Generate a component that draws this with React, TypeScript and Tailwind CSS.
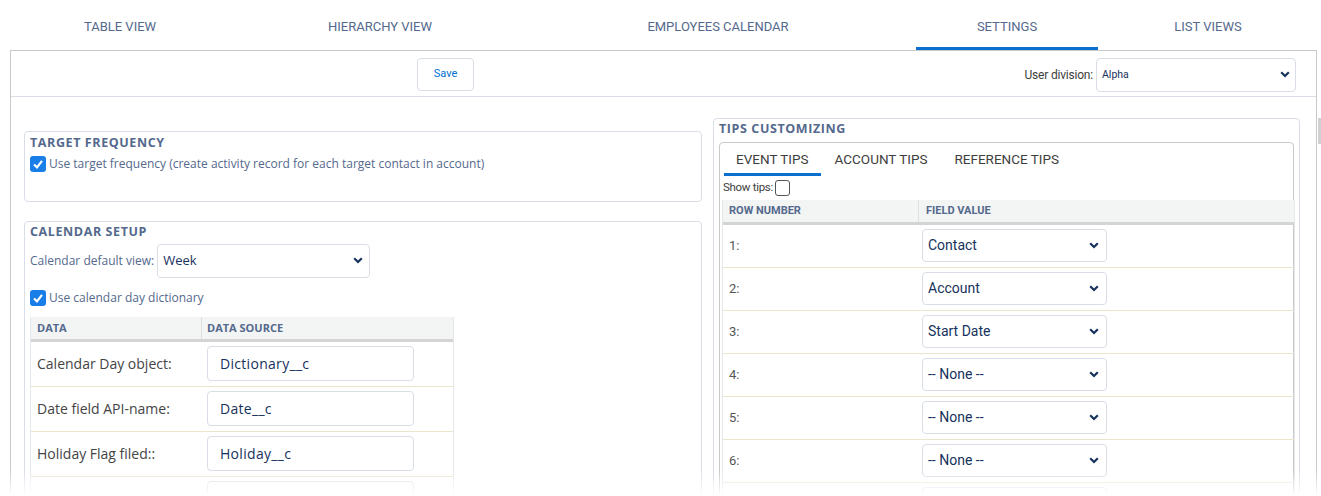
import React from "react";

const tabs = [
  { label: "TABLE VIEW", w: "w-[240px]" },
  { label: "HIERARCHY VIEW", w: "w-[280px]" },
  { label: "EMPLOYEES CALENDAR", w: "w-[396px]" },
  { label: "SETTINGS", w: "w-[182px]", active: true },
  { label: "LIST VIEWS", w: "w-[220px]" },
];

const dayRows = [
  { label: "Calendar Day object:", value: "Dictionary__c" },
  { label: "Date field API-name:", value: "Date__c" },
  { label: "Holiday Flag filed::", value: "Holiday__c" },
  { label: "", value: "" },
];

const tipRows = ["Contact", "Account", "Start Date", "-- None --", "-- None --", "-- None --", ""];

function Chevron({ className = "" }: { className?: string }) {
  return (
    <svg viewBox="0 0 10 7" className={`h-[7px] w-[10px] ${className}`}>
      <polyline points="1.2,1.2 5,5 8.8,1.2" fill="none" stroke="#16325c" strokeWidth="2.2" />
    </svg>
  );
}

function Checked() {
  return (
    <span className="flex h-4 w-4 items-center justify-center rounded-[3px] bg-[#1a7ee8]">
      <svg viewBox="0 0 12 12" className="h-3 w-3">
        <polyline points="2,6.5 5,9.3 10,2.8" fill="none" stroke="white" strokeWidth="2.2" />
      </svg>
    </span>
  );
}

function Title({ children }: { children: React.ReactNode }) {
  return (
    <div className="text-[12.5px] font-bold tracking-[0.6px] text-[#54698d] font-['Open_Sans',sans-serif]">
      {children}
    </div>
  );
}

export default function App() {
  return (
    <div className="relative h-[496px] w-[1321px] overflow-hidden bg-white font-['Open_Sans',sans-serif]">
      {/* top tabs */}
      <div className="flex h-[50px]">
        {tabs.map((t) => (
          <div
            key={t.label}
            className={`${t.w} flex items-center justify-center pt-[3px] text-[13px] text-[#54698d] font-['Roboto',sans-serif] ${
              t.active ? "border-b-[3px] border-[#0b6fd0] pt-[6px]" : ""
            }`}
          >
            {t.label}
          </div>
        ))}
      </div>

      <div className="ml-[10px] w-[1307px] border border-[#c9c9c9]">
        {/* toolbar */}
        <div className="flex h-[46px] items-center border-b border-[#d8dde6]">
          <button className="ml-[406px] mt-[2px] h-[33px] w-[57px] rounded-[4px] border border-[#d8dde6] text-[11px] text-[#0070d2] font-['Roboto',sans-serif]">
            Save
          </button>
          <div className="ml-auto mr-[20px] mt-[2px] flex items-center gap-[3px]">
            <span className="text-[12px] tracking-[-0.2px] text-[#3e3e3c] font-['Roboto',sans-serif]">User division:</span>
            <div className="flex h-[34px] w-[200px] items-center justify-between rounded-[4px] border border-[#d8dde6] pl-[5px] pr-[5px]">
              <span className="text-[10.5px] text-[#16325c] font-['Roboto',sans-serif]">Alpha</span>
              <Chevron />
            </div>
          </div>
        </div>

        {/* body */}
        <div className="flex items-start pl-[13px] pr-[15px]">
          {/* left column */}
          <div className="mt-[34px] flex w-[678px] flex-col gap-[19px]">
            <div className="h-[71px] rounded-[4px] border border-[#d8dde6] px-[5px] pt-[2px]">
              <Title>TARGET FREQUENCY</Title>
              <div className="mt-[2px] flex items-center gap-[3px]">
                <Checked />
                <span className="text-[12px] text-[#54698d]">
                  Use target frequency (create activity record for each target contact in account)
                </span>
              </div>
            </div>

            <div className="h-[400px] rounded-[4px] border border-[#d8dde6] px-[5px] pt-[1px]">
              <Title>CALENDAR SETUP</Title>
              <div className="mt-[2px] flex items-center gap-[3px]">
                <span className="text-[12px] text-[#54698d]">Calendar default view:</span>
                <div className="flex h-[34px] w-[213px] items-center justify-between rounded-[4px] border border-[#d8dde6] pl-[5px] pr-[6px]">
                  <span className="text-[13px] text-[#16325c]">Week</span>
                  <Chevron />
                </div>
              </div>
              <div className="mt-[11px] flex items-center gap-[3px]">
                <Checked />
                <span className="text-[12px] text-[#54698d]">Use calendar day dictionary</span>
              </div>
              <div className="mt-[10px] w-[424px] border-x border-[#e4e7ec]">
                <div className="flex h-[25px] items-center border-b-[3px] border-[#d4d4d4] bg-[#f3f4f4] text-[11px] font-bold text-[#54698d]">
                  <div className="flex h-full w-[171px] items-center border-r border-[#e0e0e0] pl-[6px]">DATA</div>
                  <div className="pl-[5px]">DATA SOURCE</div>
                </div>
                {dayRows.map((r, i) => (
                  <div key={i} className="flex h-[45px] items-center border-b border-[#ebe5cc]">
                    <div className="w-[176px] pl-[6px] text-[14px] text-[#444444]">{r.label}</div>
                    <div className="flex h-[35px] w-[207px] items-center rounded-[4px] border border-[#d8dde6] pl-[12px] text-[14px] tracking-[0.3px] text-[#16325c]">
                      {r.value}
                    </div>
                  </div>
                ))}
              </div>
            </div>
          </div>

          {/* right column */}
          <div className="ml-[11px] mt-[21px] h-[420px] w-[587px] rounded-[4px] border border-[#d8dde6] px-[5px] pt-[1px]">
            <Title>TIPS CUSTOMIZING</Title>
            <div className="mt-[3px] h-[400px] rounded-[4px] border border-[#c9c9c9] px-[1px]">
              <div className="flex h-[33px] pl-[3px] text-[13.5px] text-[#3e3e3c] font-['Roboto',sans-serif]">
                <div className="flex items-center border-b-[3px] border-[#0b6fd0] px-[12px] pt-[3px]">EVENT TIPS</div>
                <div className="flex items-center px-[14px]">ACCOUNT TIPS</div>
                <div className="flex items-center px-[13px]">REFERENCE TIPS</div>
              </div>
              <div className="flex h-[24px] items-center gap-[2px] pl-[2px] text-[11.5px] tracking-[-0.3px] text-[#3e3e3c] font-['Roboto',sans-serif]">
                <span>Show tips:</span>
                <span className="h-4 w-[15px] rounded-[3px] border border-[#555]" />
              </div>
              <div className="ml-[1px] w-[573px] border-x border-[#e4e7ec]">
                <div className="flex h-[25px] items-center border-b-[3px] border-[#d4d4d4] bg-[#f3f4f4] text-[11px] font-bold text-[#54698d] font-['Roboto',sans-serif]">
                  <div className="flex h-full w-[196px] items-center border-r border-[#e0e0e0] pl-[6px]">ROW NUMBER</div>
                  <div className="pl-[7px]">FIELD VALUE</div>
                </div>
                {tipRows.map((v, i) => (
                  <div key={i} className="flex h-[43px] items-center border-b border-[#ebe5cc]">
                    <div className="w-[199px] pl-[6px] text-[13px] text-[#555] font-['Roboto',sans-serif]">
                      {v ? `${i + 1}:` : ""}
                    </div>
                    <div className="flex h-[33px] w-[185px] items-center justify-between rounded-[4px] border border-[#d8dde6] pl-[5px] pr-[7px]">
                      <span className="text-[14px] text-[#16325c] font-['Roboto',sans-serif]">{v}</span>
                      {v && <Chevron />}
                    </div>
                  </div>
                ))}
              </div>
            </div>
          </div>
        </div>
      </div>

      {/* scrollbar stub on the right edge */}
      <div className="absolute right-0 top-[118px] h-[26px] w-[3px] bg-[#d0d0d0]" />
      {/* bottom fade */}
      <div className="pointer-events-none absolute bottom-0 left-0 h-[26px] w-full bg-gradient-to-b from-white/0 to-white" />
    </div>
  );
}
